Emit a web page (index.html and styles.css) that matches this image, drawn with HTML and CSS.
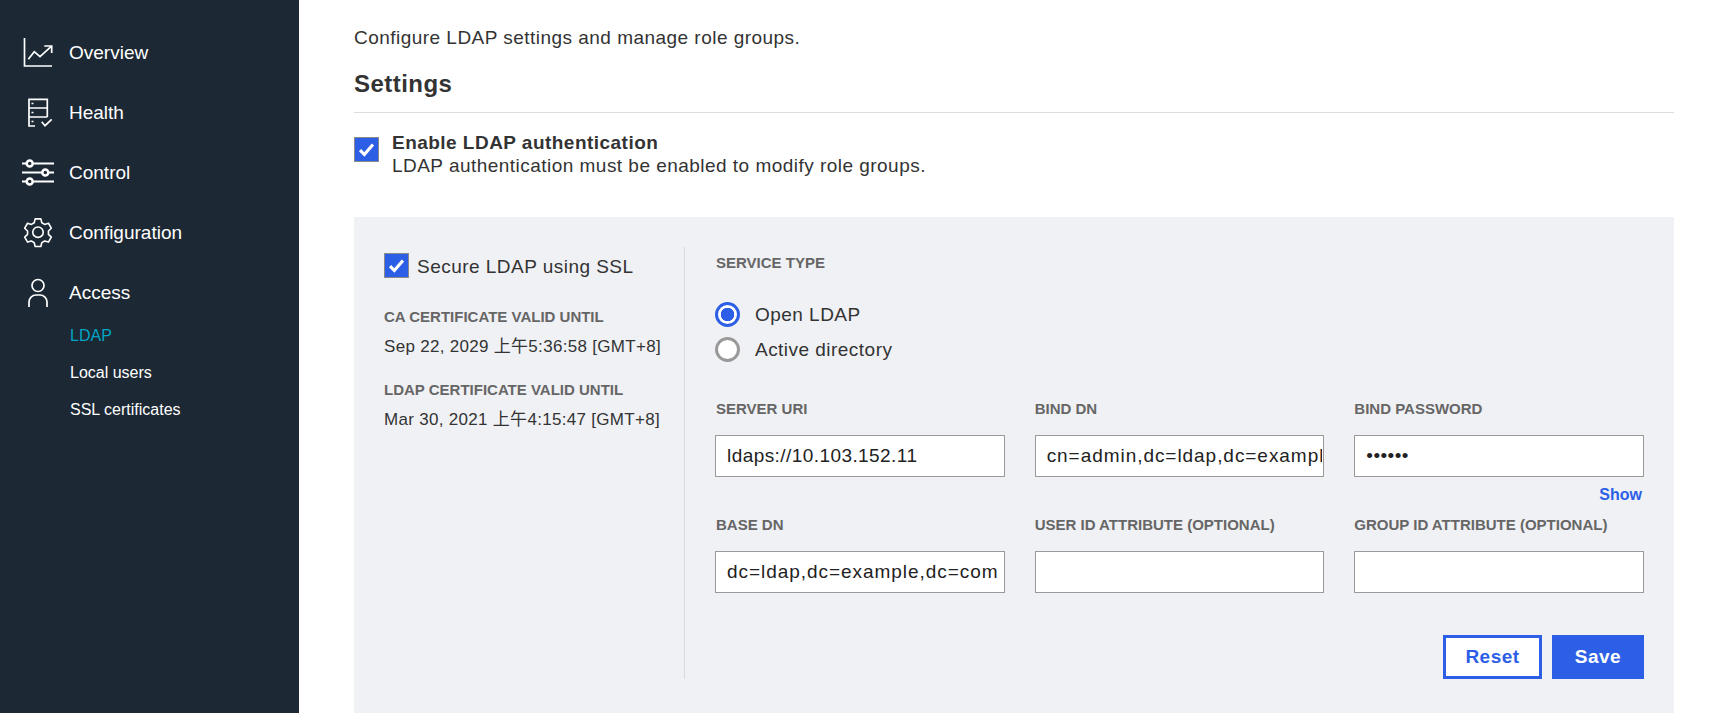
FILE: index.html
```html
<!DOCTYPE html>
<html lang="en">
<head>
    <meta charset="UTF-8">
    <meta name="viewport" content="width=device-width, initial-scale=1.0">
    <title>LDAP</title>

    <link rel="stylesheet" href="styles.css">
</head>
<body>

    <aside class="sidebar">
        <nav class="nav">
            <a class="nav-item" href="#">
                <svg class="nav-icon" viewBox="0 0 32 32"><path d="M2.500 1v28h27.500"/><path d="M6.300 22.300l6-7.600 5.700 5 11-10"/><path d="M22.300 9h7.400v7"/></svg>
                Overview
            </a>
            <a class="nav-item" href="#">
                <svg class="nav-icon" viewBox="0 0 32 32"><path d="M25.300 20V2.300H7V29h6"/><path d="M7 11h18.300M7 20h18.300"/><path d="M9.500 6.500h2M9.500 15.500h2M9.500 24.500h2"/><path d="M19.700 24.700l3.300 4 6.700-6.400"/></svg>
                Health
            </a>
            <a class="nav-item" href="#">
                <svg class="nav-icon icon-sliders" viewBox="0 0 32 32"><path d="M0 6.500h32M0 15.500h32M0 24.500h32"/><circle cx="7.700" cy="6.500" r="3"/><circle cx="23.300" cy="15.500" r="3"/><circle cx="7.700" cy="24.500" r="3"/></svg>
                Control
            </a>
            <a class="nav-item" href="#">
                <svg class="nav-icon icon-gear" viewBox="0 0 32 32"><g transform="translate(16 15.200) scale(.95) translate(-16 -16)"><circle cx="16" cy="16" r="5.500"/><path d="M13 2h6l1 4 3 1.800 4-1.200 3 5.200-3 2.900v3.600l3 2.900-3 5.200-4-1.200-3 1.800-1 4h-6l-1-4-3-1.800-4 1.200-3-5.200 3-2.900v-3.600l-3-2.900 3-5.200 4 1.200 3-1.800z"/></g></svg>
                Configuration
            </a>
            <a class="nav-item" href="#">
                <svg class="nav-icon" viewBox="0 0 32 32"><circle cx="16" cy="8.500" r="6"/><path d="M7 30v-5a7 7 0 0 1 7-7h4a7 7 0 0 1 7 7v5"/></svg>
                Access
            </a>
            <div class="subnav">
                <a class="subnav-item active" href="#">LDAP</a>
                <a class="subnav-item" href="#">Local users</a>
                <a class="subnav-item" href="#">SSL certificates</a>
            </div>
        </nav>
    </aside>

    <main class="content">
        <p class="intro">Configure LDAP settings and manage role groups.</p>
        <h2 class="section-title">Settings</h2>

        <div class="enable-row">
            <span class="checkbox"><svg viewBox="0 0 16 16"><path d="M3.500 8.500l3 3 6-7"/></svg></span>
            <div>
                <div class="enable-title">Enable LDAP authentication</div>
                <div class="enable-desc">LDAP authentication must be enabled to modify role groups.</div>
            </div>
        </div>

        <section class="panel">
            <div class="panel-left">
                <div class="ssl-row">
                    <span class="checkbox"><svg viewBox="0 0 16 16"><path d="M3.500 8.500l3 3 6-7"/></svg></span>
                    <span class="ssl-text">Secure LDAP using SSL</span>
                </div>
                <div class="field-label cert-label">CA certificate valid until</div>
                <div class="cert-date">Sep 22, 2029 上午5:36:58 [GMT+8]</div>
                <div class="field-label cert-label second">LDAP certificate valid until</div>
                <div class="cert-date">Mar 30, 2021 上午4:15:47 [GMT+8]</div>
            </div>

            <form class="panel-right">
                <div class="field-label service-label">Service type</div>
                <div class="radio-group">
                    <div class="radio-row"><span class="radio checked"></span>Open LDAP</div>
                    <div class="radio-row"><span class="radio"></span>Active directory</div>
                </div>

                <div class="field-grid">
                    <div class="field">
                        <label class="field-label" for="uri">Server URI</label>
                        <input type="text" id="uri" value="ldaps://10.103.152.11">
                    </div>
                    <div class="field">
                        <label class="field-label" for="bindDn">Bind DN</label>
                        <input type="text" class="input-dn" id="bindDn" value="cn=admin,dc=ldap,dc=example,dc=com">
                    </div>
                    <div class="field">
                        <label class="field-label" for="bindPassword">Bind password</label>
                        <input type="password" id="bindPassword" value="secret">
                        <a class="show-link" href="#">Show</a>
                    </div>
                    <div class="field">
                        <label class="field-label" for="baseDn">Base DN</label>
                        <input type="text" class="input-dn" id="baseDn" value="dc=ldap,dc=example,dc=com">
                    </div>
                    <div class="field">
                        <label class="field-label" for="userId">User ID attribute (optional)</label>
                        <input type="text" id="userId">
                    </div>
                    <div class="field">
                        <label class="field-label" for="groupId">Group ID attribute (optional)</label>
                        <input type="text" id="groupId">
                    </div>
                </div>

                <div class="actions">
                    <button type="button" class="btn btn-outline">Reset</button>
                    <button type="button" class="btn btn-primary">Save</button>
                </div>
            </form>
        </section>
    </main>

</body>
</html>
```

FILE: styles.css
```css
html, body {
    height: 100%;
}

body {
    margin: 0;
    display: flex;
    overflow: hidden;
    background-color: #fff;
    color: #333;
    font-family: "Liberation Sans", "Noto Sans CJK SC", sans-serif;
    font-size: 19px;
}

a {
    text-decoration: none;
}

/* sidebar */
.sidebar {
    flex: 0 0 299px;
    background-color: #1c2834;
}

.nav {
    display: flex;
    flex-direction: column;
    gap: 20px;
    padding-top: 33px;
}

.nav-item {
    display: flex;
    align-items: center;
    gap: 15px;
    height: 40px;
    padding-left: 22px;
    color: #fff;
    font-size: 19px;
}

.nav-icon {
    width: 32px;
    height: 32px;
    fill: none;
    stroke: #fff;
    stroke-width: 1.700;
}

.icon-sliders {
    stroke-width: 2;
}

.icon-sliders circle {
    fill: #1c2834;
    stroke-width: 2.500;
}

.icon-gear {
    stroke-linejoin: round;
}

.subnav {
    display: flex;
    flex-direction: column;
    margin-top: -16px;
}

.subnav-item {
    height: 37px;
    line-height: 37px;
    padding-left: 70px;
    color: #fff;
    font-size: 16px;
}

.subnav-item.active {
    color: #00a5c4;
}

/* main */
.content {
    flex: 1;
    min-width: 0;
    padding: 27px 37px 0 55px;
    letter-spacing: .47px;
}

.intro {
    margin: 0;
    line-height: 22px;
}

.section-title {
    margin: 21px 0 0;
    padding-bottom: 14px;
    border-bottom: 1px solid #ddd;
    font-size: 24px;
    line-height: 28px;
}

.enable-row {
    display: flex;
    gap: 13px;
    margin-top: 18px;
    line-height: 23px;
}

.enable-row .checkbox {
    margin-top: 6px;
}

.enable-title {
    font-weight: 700;
}

.checkbox {
    display: flex;
    flex: 0 0 25px;
    box-sizing: border-box;
    width: 25px;
    height: 25px;
    background-color: #2d5fe6;
    border: 1px solid #8a8a8a;
}

.checkbox svg {
    fill: none;
    stroke: #fff;
    stroke-width: 2.200;
}

.panel {
    display: flex;
    margin-top: 40px;
    padding: 30px 30px 34px;
    background-color: #f0f1f5;
}

.panel-left {
    flex: 0 0 301px;
    box-sizing: border-box;
    height: 432px;
    padding-top: 6px;
    border-right: 1px solid #d8d9dd;
}

.ssl-row {
    display: flex;
    align-items: center;
    gap: 8px;
}

.ssl-text {
    padding-top: 2px;
}

.field-label {
    display: block;
    color: #666;
    font-size: 15px;
    font-weight: 700;
    letter-spacing: 0;
    line-height: 18px;
    text-transform: uppercase;
}

.cert-label {
    margin-top: 30px;
}

.cert-label.second {
    margin-top: 24px;
}

.cert-date {
    margin-top: 11px;
    font-size: 17px;
    letter-spacing: .3px;
    line-height: 20px;
    white-space: nowrap;
}

.panel-right {
    flex: 1;
    min-width: 0;
    padding: 7px 0 0 30px;
}

.service-label,
.field:nth-child(3n+1) .field-label {
    padding-left: 1px;
}

.radio-group {
    display: flex;
    flex-direction: column;
    gap: 10px;
    margin-top: 30px;
}

.radio-row {
    display: flex;
    align-items: center;
    gap: 15px;
    height: 25px;
}

.radio {
    box-sizing: border-box;
    width: 25px;
    height: 25px;
    background-color: #fff;
    border: 3px solid #999;
    border-radius: 50%;
}

.radio.checked {
    border-color: #2d5fe6;
    background: radial-gradient(circle, #2d5fe6 6.500px, #fff 7px);
}

.field-grid {
    display: grid;
    grid-template-columns: repeat(3, 1fr);
    gap: 12px 30px;
    margin-top: 38px;
}

.field {
    display: flex;
    flex-direction: column;
}

.field input {
    box-sizing: border-box;
    width: 100%;
    height: 42px;
    margin-top: 17px;
    padding: 0 1px 0 11px;
    border: 1px solid #999;
    border-radius: 0;
    background-color: #fff;
    color: #222;
    font-family: inherit;
    font-size: 19px;
    letter-spacing: .43px;
    outline: none;
}

.field .input-dn {
    letter-spacing: .95px;
}

.show-link {
    margin-top: 9px;
    padding-right: 2px;
    color: #2d5fe6;
    font-size: 16px;
    font-weight: 700;
    letter-spacing: 0;
    line-height: 18px;
    text-align: right;
}

.actions {
    display: flex;
    justify-content: flex-end;
    gap: 10px;
    margin-top: 42px;
}

.btn {
    box-sizing: border-box;
    height: 44px;
    border: 3px solid #2d5fe6;
    border-radius: 0;
    font-family: inherit;
    font-size: 19px;
    font-weight: 700;
    letter-spacing: .5px;
    cursor: pointer;
}

.btn-outline {
    width: 99px;
    background-color: #fff;
    color: #2d5fe6;
}

.btn-primary {
    width: 92px;
    background-color: #2d5fe6;
    color: #fff;
}
```
